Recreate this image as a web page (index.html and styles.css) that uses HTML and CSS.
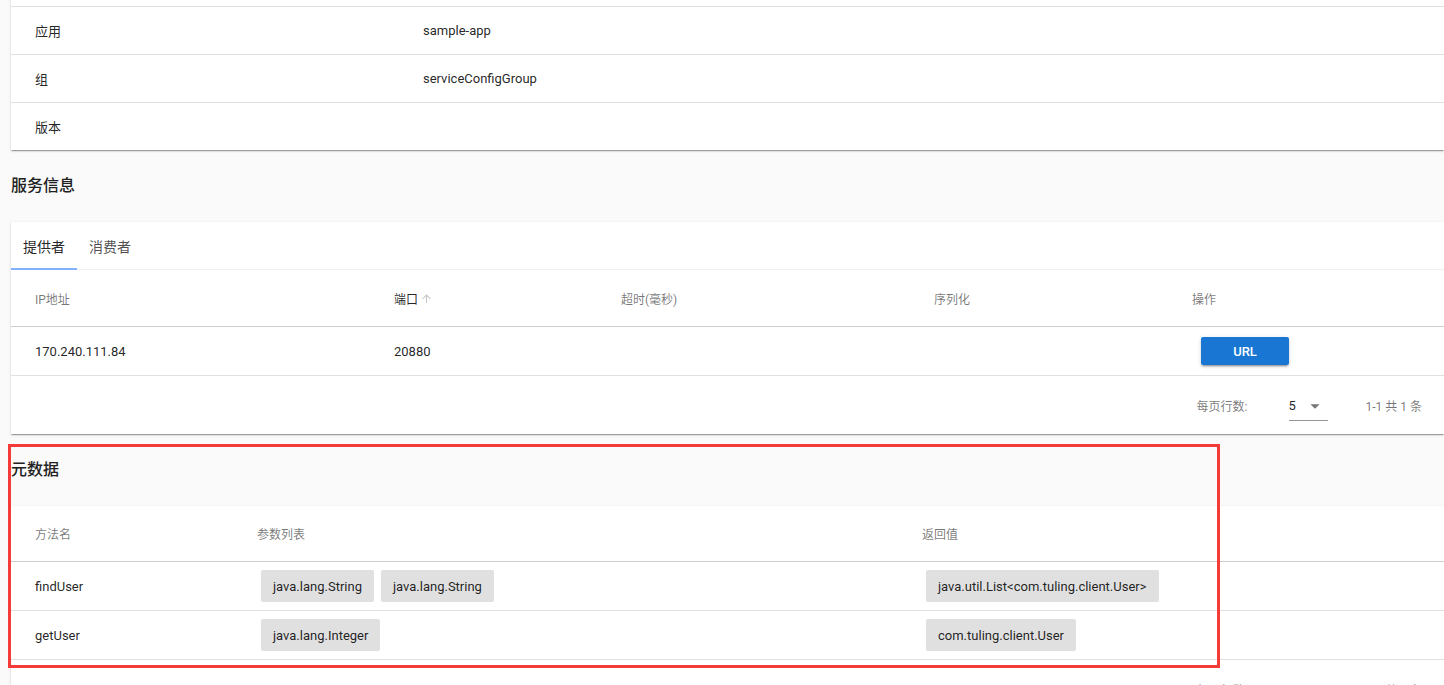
FILE: index.html
```html
<!DOCTYPE html>
<html lang="zh-CN">
<head>
<meta charset="utf-8">
<title>服务详情</title>
<link rel="stylesheet" href="styles.css">
</head>
<body>
<div class="page">
  <div class="card card-basic">
    <div class="kv-row"><div class="cell"></div><div class="cell"></div></div>
    <div class="kv-row"><div class="cell">应用</div><div class="cell">sample-app</div></div>
    <div class="kv-row"><div class="cell">组</div><div class="cell">serviceConfigGroup</div></div>
    <div class="kv-row"><div class="cell">版本</div><div class="cell"></div></div>
  </div>

  <h2 class="section-title">服务信息</h2>

  <div class="card">
    <div class="tabs">
      <div class="tab active">提供者</div>
      <div class="tab">消费者</div>
    </div>
    <div class="grid providers head-row head-tall">
      <div class="cell">IP地址</div>
      <div class="cell sorted">端口<svg class="sort-icon" viewBox="0 0 24 24"><path d="M4 12l1.41 1.41L11 7.83V20h2V7.83l5.58 5.59L20 12l-8-8-8 8z"/></svg></div>
      <div class="cell">超时(毫秒)</div>
      <div class="cell">序列化</div>
      <div class="cell">操作</div>
    </div>
    <div class="grid providers body-row">
      <div class="cell">170.240.111.84</div>
      <div class="cell">20880</div>
      <div class="cell"></div>
      <div class="cell"></div>
      <div class="cell"><button class="btn">URL</button></div>
    </div>
    <div class="dt-footer">
      <span class="rpp-label">每页行数:</span>
      <div class="select"><span>5</span><svg class="drop" viewBox="0 0 24 24"><path d="M7 10l5 5 5-5z"/></svg></div>
      <span class="range">1-1 共 1 条</span>
    </div>
  </div>

  <h2 class="section-title">元数据</h2>

  <div class="card">
    <div class="grid meta head-row">
      <div class="cell">方法名</div>
      <div class="cell">参数列表</div>
      <div class="cell">返回值</div>
    </div>
    <div class="grid meta body-row">
      <div class="cell">findUser</div>
      <div class="cell chips"><span class="chip">java.lang.String</span><span class="chip">java.lang.String</span></div>
      <div class="cell chips"><span class="chip">java.util.List&lt;com.tuling.client.User&gt;</span></div>
    </div>
    <div class="grid meta body-row">
      <div class="cell">getUser</div>
      <div class="cell chips"><span class="chip">java.lang.Integer</span></div>
      <div class="cell chips"><span class="chip">com.tuling.client.User</span></div>
    </div>
    <div class="dt-footer">
      <span class="rpp-label">每页行数:</span>
      <div class="select"><span>5</span><svg class="drop" viewBox="0 0 24 24"><path d="M7 10l5 5 5-5z"/></svg></div>
      <span class="range">1-2 共 2 条</span>
    </div>
  </div>
</div>
<div class="highlight"></div>
</body>
</html>
```

FILE: styles.css
```css
html, body {
  margin: 0;
  padding: 0;
  background: #fafafa;
  font-family: Roboto, "Noto Sans CJK SC", "Noto Sans", sans-serif;
  color: rgba(0,0,0,.87);
  overflow: hidden;
}

.page {
  padding-left: 11px;
  margin-top: -42px;
}

.card {
  background: #fff;
  box-shadow: 0 2px 1px -1px rgba(0,0,0,.2), 0 1px 1px 0 rgba(0,0,0,.14), 0 1px 3px 0 rgba(0,0,0,.12);
  font-size: 13px;
}

.kv-row {
  display: grid;
  grid-template-columns: 388px 1fr;
  height: 48px;
  box-sizing: border-box;
  align-items: center;
  border-top: 1px solid rgba(0,0,0,.12);
}
.kv-row:first-child { border-top: none; }

.cell {
  padding: 0 24px;
  white-space: nowrap;
  display: flex;
  align-items: center;
}

.section-title {
  margin: 0;
  padding: 24px 0;
  font-size: 16px;
  line-height: 24px;
  font-weight: 500;
  color: #212121;
}

.tabs {
  display: flex;
  height: 48px;
  box-sizing: border-box;
  border-bottom: 1px solid #f0f0f0;
}
.tab {
  padding: 0 12px;
  display: flex;
  align-items: center;
  font-size: 14px;
  color: rgba(0,0,0,.7);
}
.tab.active {
  color: rgba(0,0,0,.87);
  border-bottom: 2px solid #82b1ff;
  margin-bottom: -1px;
  padding-top: 1px;
}

.grid { display: grid; box-sizing: border-box; align-items: center; }
.providers { grid-template-columns: 359px 227px 313px 258px 1fr; }
.meta { grid-template-columns: 222px 665px 1fr; }

.head-row {
  height: 56px;
  font-size: 12px;
  color: rgba(0,0,0,.54);
  border-bottom: 1px solid rgba(0,0,0,.2);
}
.head-tall { height: 57px; }
.head-row .sorted { color: rgba(0,0,0,.87); }
.sort-icon {
  width: 13px;
  height: 13px;
  margin-left: 2px;
  fill: rgba(0,0,0,.22);
}

.body-row {
  height: 49px;
  border-bottom: 1px solid rgba(0,0,0,.12);
}

.btn {
  margin-left: 9px;
  width: 88px;
  height: 28px;
  border: none;
  border-radius: 2px;
  background: #1976d2;
  color: #fff;
  font-family: Roboto, sans-serif;
  font-weight: 500;
  font-size: 13px;
  box-shadow: 0 3px 1px -2px rgba(0,0,0,.2), 0 2px 2px 0 rgba(0,0,0,.14), 0 1px 5px 0 rgba(0,0,0,.12);
}

.chips { padding-left: 24px; }
.chip {
  display: inline-flex;
  align-items: center;
  height: 32px;
  padding: 0 12px;
  margin: 0 3px 0 4px;
  background: #e0e0e0;
  border-radius: 2px;
  font-size: 13px;
  color: rgba(0,0,0,.87);
}

.dt-footer {
  display: flex;
  justify-content: flex-end;
  align-items: center;
  height: 58px;
  padding-right: 22px;
  font-size: 12px;
  color: rgba(0,0,0,.54);
}
.select {
  display: flex;
  align-items: center;
  width: 39px;
  height: 30px;
  margin-left: 41px;
  margin-top: 2px;
  box-sizing: border-box;
  border-bottom: 1px solid rgba(0,0,0,.42);
  color: rgba(0,0,0,.87);
  font-size: 13px;
}
.drop {
  width: 22px;
  height: 22px;
  margin-left: 8px;
  fill: rgba(0,0,0,.54);
}
.range { margin-left: 38px; }

.highlight {
  position: absolute;
  left: 8px;
  top: 444px;
  width: 1206px;
  height: 218px;
  border: 3px solid #f63a3a;
  pointer-events: none;
}
```
